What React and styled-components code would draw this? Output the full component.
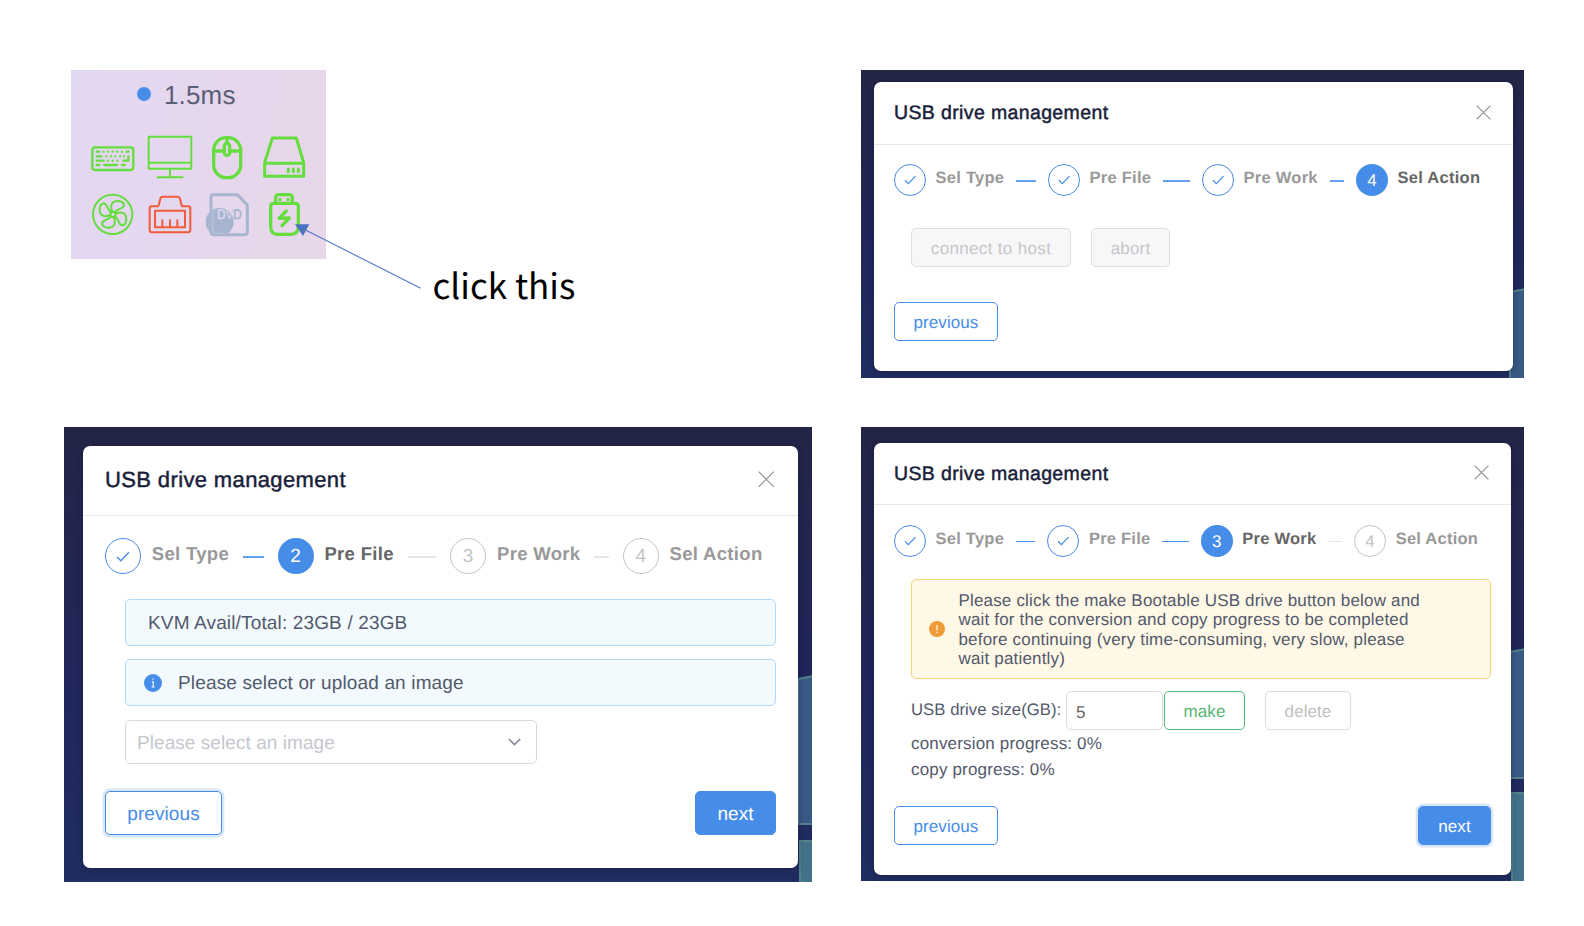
import React from 'react';
import styled, { createGlobalStyle, css, ThemeProvider } from 'styled-components';

const GlobalStyle = createGlobalStyle`
  * { box-sizing: border-box; }
  body {
    margin: 0;
    background: #fff;
    font-family: "Liberation Sans", Arial, sans-serif;
    color: #53596c;
    text-rendering: geometricPrecision;
  }
  button, input { font-family: inherit; text-rendering: inherit; }
`;

const compact = {
  titleSize: 19.5, titleSpacing: 0.37, titleDrop: 2, header: 62, pad: 20, close: 15,
  circle: 32, labelGap: 9.5, labelLift: 3, lineGap: 12, labelSize: 16.5, labelSpacing: 0.27, pitch: 154, numSize: 17,
  font: 17, spacing: 0.17, textDrop: 1, buttonH: 39, buttonDrop: 2, indent: 17, lineH: 2,
};
const compactNarrow = { ...compact, header: 61, pitch: 153.4, lineH: 1, labelSpacing: 0.24 };
const large = {
  titleSize: 22, titleSpacing: 0.37, titleDrop: 0, header: 69, pad: 22, close: 16.5,
  circle: 36, labelGap: 10.8, labelLift: 5, lineGap: 14, labelSize: 18.5, labelSpacing: 0.32, pitch: 172.6, numSize: 19,
  font: 19, spacing: 0.15, textDrop: 3, buttonH: 44, buttonDrop: 3, indent: 20, lineH: 2,
};

const Page = styled.main`
  width: 1584px;
  height: 926px;
  padding: 70px 0 0 64px;
  display: grid;
  grid-template-columns: 748px 663px;
  grid-template-rows: 308px 455px;
  gap: 49px;
  align-items: start;
  overflow: hidden;
`;

/* ---------- status widget ---------- */
const Intro = styled.section`
  position: relative;
  display: flex;
  align-items: flex-start;
  padding-left: 7px;
`;
const StatusCard = styled.div`
  width: 255px;
  height: 189px;
  background: linear-gradient(100deg, #e3d8f2 0%, #e5d7ee 45%, #e8d7e9 100%);
`;
const Latency = styled.div`
  display: flex;
  align-items: center;
  height: 51px;
  padding-left: 65.5px;
  gap: 13.5px;
  font-size: 26px;
  letter-spacing: 0.15px;
  color: #5b6074;
`;
const Dot = styled.span`
  width: 14px;
  height: 14px;
  border-radius: 50%;
  background: #468ce9;
  margin-bottom: 3px;
`;
const IconGrid = styled.div`
  display: grid;
  grid-template-columns: repeat(4, 44px);
  gap: 13px;
  padding: 15px 0 0 20px;
`;
const Glyph = styled.svg.attrs({ viewBox: '0 0 132 132' })`
  width: 44px;
  height: 44px;
  display: block;
  overflow: visible;
  fill: none;
  stroke: ${(p) => p.$color || '#66dd3f'};
  stroke-width: ${(p) => p.$w || 6};
  stroke-linecap: round;
  stroke-linejoin: round;
`;
const Arrow = styled.svg`
  position: absolute;
  left: 231px;
  top: 154px;
  width: 127px;
  height: 66px;
`;
const Hint = styled.p`
  margin: 187px 0 0 106.5px;
  font-family: "Noto Sans CJK SC", "Noto Sans", sans-serif;
  font-size: 35px;
  line-height: 56px;
  color: #000;
  white-space: nowrap;
`;

const Petal = ({ turn }) => (
  <path
    transform={`rotate(${turn} 66 64)`}
    d="M64 56 C56 38 62 24 80 24 C100 25 104 38 92 45 C83 50 77 50 72 58"
  />
);

const StatusIcons = () => (
  <IconGrid>
    <Glyph $w={7}>
      <rect x="4" y="34" width="123" height="68" rx="8" />
      <path d="M17 47h8M107 47h6M17 61h14M17 74h21M17 87h8M39 87h39M93 87h8M98 74h14V61" />
      <path d="M38 47h.1M51 47h.1M65 47h.1M79 47h.1M93 47h.1M46 61h.1M60 61h.1M73 61h.1M87 61h.1M99 61h.1M51 74h.1M65 74h.1M79 74h.1" />
    </Glyph>
    <Glyph>
      <path d="M2 2H130V98H2ZM2 80H130M66 98V123M29 124H104" />
    </Glyph>
    <Glyph $w={10}>
      <rect x="26" y="5" width="81" height="120" rx="38" />
      <path d="M26 45H58M74 45H107M66 4V22" />
      <rect x="58" y="22" width="16" height="36" rx="8" />
    </Glyph>
    <Glyph $w={9}>
      <path d="M8 82H125V121H8ZM8 80L31 6H103L125 80" />
      <path d="M79 99V107M94 99V107M109 99V107" />
    </Glyph>
    <Glyph>
      <circle cx="65" cy="64" r="59" />
      <circle cx="66" cy="64" r="8" />
      <Petal turn={0} />
      <Petal turn={90} />
      <Petal turn={180} />
      <Petal turn={270} />
    </Glyph>
    <Glyph $color="#f05b3b">
      <path d="M10 40H28Q32 40 33 34L37 17Q38 11 45 11H88Q94 11 96 17L100 34Q101 40 106 40H120Q127 40 127 47V111Q127 118 120 118H12Q5 118 5 111V47Q5 40 10 40Z" />
      <path d="M21 53H111V103H21ZM43 82V103M66 82V103M88 82V103" />
    </Glyph>
    <Glyph $color="#a8b5d1" $w={9}>
      <path d="M25 5H97L127 36V116Q127 125 118 125H28Q18 125 18 116V13Q18 5 25 5Z" />
      <circle cx="44" cy="87" r="42" fill="#a8b5d1" stroke="none" />
      <path d="M23 52V114Q23 121 30 121H54" stroke="#bcc5dc" strokeWidth="3" />
      <text transform="translate(36 79) scale(.84 1)" fontSize="42" strokeWidth="1.6">
        <tspan fill="#dcd8ec" stroke="#dcd8ec">D</tspan>
        <tspan fill="#cdd0e6" stroke="#cdd0e6">V</tspan>
        <tspan fill="#a8b5d1">D</tspan>
      </text>
    </Glyph>
    <Glyph $w={10}>
      <path d="M34 31H100Q109 31 109 40V102Q108 124 86 124H48Q27 124 26 102V40Q26 31 34 31Z" />
      <path d="M41 31V14Q41 5 50 5H82Q91 5 91 14V31" />
      <path d="M54 19V20M78 19V20M73 54L51 76L82 75L60 98" />
    </Glyph>
  </IconGrid>
);

/* ---------- dialog ---------- */
const Backdrop = styled.section`
  position: relative;
  height: ${(p) => p.$height}px;
  padding: ${(p) => p.$padding};
  background: linear-gradient(180deg, #232547 0%, #20265a 55%, #202d60 100%);
`;
const Scenery = styled.svg`
  position: absolute;
  right: 0;
  bottom: 0;
  width: 16px;
  height: 100%;
`;
const Dialog = styled.div`
  position: relative;
  height: 100%;
  background: #fff;
  border-radius: 7px;
  box-shadow: 0 1px 6px rgba(8, 12, 40, 0.35);
`;
const Header = styled.header`
  display: flex;
  align-items: center;
  justify-content: space-between;
  height: ${(p) => p.theme.header + 1}px;
  padding: 0 ${(p) => p.theme.pad + 1.7}px 1px ${(p) => p.theme.pad}px;
  border-bottom: 1px solid #e6e8ec;
`;
const Title = styled.h2`
  margin: 0;
  padding-top: ${(p) => p.theme.titleDrop}px;
  font-size: ${(p) => p.theme.titleSize}px;
  font-weight: 400;
  letter-spacing: ${(p) => p.theme.titleSpacing}px;
  color: #182039;
  -webkit-text-stroke: 0.45px #182039;
`;
const CloseIcon = styled.svg.attrs({ viewBox: '0 0 15 15' })`
  width: ${(p) => p.theme.close}px;
  height: ${(p) => p.theme.close}px;
  margin-bottom: 1px;
  fill: none;
  stroke: #8f8f8f;
  stroke-width: 1.1;
`;
const Steps = styled.ol`
  display: flex;
  list-style: none;
  margin: 0;
  padding: 0 0 0 ${(p) => p.theme.pad}px;
`;
const Step = styled.li`
  display: flex;
  align-items: center;
  flex: 0 0 ${(p) => (p.$last ? 'auto' : `${p.theme.pitch}px`)};
  height: ${(p) => p.theme.circle}px;
`;
const states = {
  done: css`border: 1.5px solid #468ce9; color: #468ce9;`,
  active: css`background: #468ce9; color: #fff;`,
  todo: css`border: 1px solid #c4c4c4; color: #c4c4c4;`,
};
const Circle = styled.span`
  flex: none;
  display: flex;
  align-items: center;
  justify-content: center;
  width: ${(p) => p.theme.circle}px;
  height: ${(p) => p.theme.circle}px;
  padding-top: ${(p) => (p.$state === 'done' ? 0 : 1)}px;
  border-radius: 50%;
  font-size: ${(p) => p.theme.numSize}px;
  ${(p) => states[p.$state]}
`;
const Tick = styled.svg.attrs({ viewBox: '0 0 13 11' })`
  width: ${(p) => p.theme.circle * 0.39}px;
  fill: none;
  stroke: currentColor;
  stroke-width: 1.3;
  margin-top: 1px;
`;
const StepLabel = styled.strong`
  margin: 0 0 ${(p) => p.theme.labelLift}px ${(p) => p.theme.labelGap}px;
  font-size: ${(p) => p.theme.labelSize}px;
  letter-spacing: ${(p) => p.theme.labelSpacing}px;
  white-space: nowrap;
  color: ${(p) => (p.$active ? '#666' : '#999')};
`;
const StepLine = styled.span`
  flex: 1;
  height: ${(p) => p.theme.lineH}px;
  margin: 1px ${(p) => p.theme.lineGap}px 0;
  background: ${(p) => (p.$done ? (p.theme.lineH === 1 ? '#468ce9' : '#66a1ef') : '#e6e6e6')};
`;
const Body = styled.div`
  padding-top: ${(p) => p.$top}px;
  font-size: ${(p) => p.theme.font}px;
  letter-spacing: ${(p) => p.theme.spacing}px;
`;
const Content = styled.div`
  display: flex;
  flex-direction: column;
  margin: 0 ${(p) => p.theme.pad}px 0 ${(p) => p.theme.pad + p.theme.indent}px;
  padding-top: ${(p) => p.$top}px;
`;
const tones = {
  info: css`background: #f2fafd; border-color: #afd9fa;`,
  warning: css`background: #fff8e6; border-color: #f5d27c;`,
};
const Alert = styled.div`
  display: flex;
  align-items: center;
  height: ${(p) => p.$height}px;
  margin-bottom: ${(p) => p.$after}px;
  padding-left: ${(p) => p.$inset}px;
  gap: ${(p) => p.$gap || 0}px;
  border: 1px solid;
  border-radius: 5px;
  line-height: 19.5px;
  white-space: pre-line;
  ${(p) => tones[p.$tone]}
`;
const Message = styled.span`
  padding-top: ${(p) => p.theme.textDrop}px;
`;
const Badge = styled.svg.attrs({ viewBox: '0 0 18 18' })`
  flex: none;
  width: ${(p) => p.$size}px;
  height: ${(p) => p.$size}px;
`;
const SelectBox = styled.div`
  display: flex;
  align-items: center;
  justify-content: space-between;
  width: 412px;
  height: 44px;
  padding: 0 15px 0 11px;
  border: 1px solid #d8d9e0;
  border-radius: 5px;
  line-height: 20px;
  letter-spacing: 0.06px;
  color: #c5c7ce;
`;
const Chevron = styled.svg.attrs({ viewBox: '0 0 13 8' })`
  width: 13px;
  height: 8px;
  fill: none;
  stroke: #848995;
  stroke-width: 1.7;
`;
const kinds = {
  outline: css`background: #fff; border-color: #468ce9; color: #468ce9;`,
  primary: css`background: #468ce9; border-color: #468ce9; color: #fff;`,
  success: css`background: #fff; border-color: #56b775; color: #56b775;`,
  muted: css`background: #f7f7f8; border-color: #dddee3; color: #c5c6cb;`,
  disabled: css`background: #fff; border-color: #dddee3; color: #bfbfc1;`,
};
const Button = styled.button`
  width: ${(p) => p.$width}px;
  height: ${(p) => p.theme.buttonH}px;
  padding: ${(p) => p.theme.buttonDrop}px 0 0;
  border: 1px solid;
  border-radius: 5px;
  font-size: ${(p) => p.theme.font}px;
  letter-spacing: ${(p) => p.$spacing ?? 0.08}px;
  ${(p) => kinds[p.$kind]}
  ${(p) => p.$focus && css`box-shadow: 0 0 0 2.4px #d8e6fa;`}
`;
const Row = styled.div`
  display: flex;
  gap: ${(p) => p.$gap || 0}px;
`;
const Footer = styled.footer`
  display: flex;
  justify-content: space-between;
  padding: ${(p) => p.$top}px ${(p) => p.theme.pad}px 0;
`;
const SizeLabel = styled.label`
  width: 155px;
  line-height: 38px;
  letter-spacing: 0.05px;
  font-size: 16.7px;
`;
const SizeInput = styled.input`
  width: 97px;
  height: 39px;
  margin-right: 1px;
  padding: 4px 9px 0;
  border: 1px solid #dddee3;
  border-radius: 5px;
  font-size: 17px;
  color: #666;
  background: #fff;
`;
const Progress = styled.div`
  height: 26px;
  line-height: 28px;
`;

const labels = ['Sel Type', 'Pre File', 'Pre Work', 'Sel Action'];

function StepBar({ current }) {
  return (
    <Steps>
      {labels.map((label, i) => {
        const n = i + 1;
        const state = n < current ? 'done' : n === current ? 'active' : 'todo';
        return (
          <Step key={label} $last={n === 4}>
            <Circle $state={state}>
              {state === 'done' ? <Tick><path d="M1 5.5L4.5 9L12 1.2" /></Tick> : n}
            </Circle>
            <StepLabel $active={state === 'active'}>{label}</StepLabel>
            {n < 4 && <StepLine $done={state === 'done'} />}
          </Step>
        );
      })}
    </Steps>
  );
}

function Buildings({ height, top, split, next }) {
  const end = split || height + 4;
  return (
    <Scenery viewBox={`0 0 16 ${height}`} preserveAspectRatio="none">
      <g fill="#385a84" stroke="#54808a" strokeWidth="2">
        <path d={`M2 ${top + 2}L18 ${top - 1}V${end}H2Z`} />
        {next && <path fill="#42718a" d={`M4 ${next}H18V${height + 4}H4Z`} />}
      </g>
    </Scenery>
  );
}

function UsbDialog({ theme, height, padding, stepsTop, current, scenery, children }) {
  return (
    <ThemeProvider theme={theme}>
      <Backdrop $height={height} $padding={padding}>
        <Buildings height={height} {...scenery} />
        <Dialog>
          <Header>
            <Title>USB drive management</Title>
            <CloseIcon><path d="M.6 .6L14.4 14.4M14.4 .6L.6 14.4" /></CloseIcon>
          </Header>
          <Body $top={stepsTop}>
            <StepBar current={current} />
            {children}
          </Body>
        </Dialog>
      </Backdrop>
    </ThemeProvider>
  );
}

export default function App() {
  return (
    <>
      <GlobalStyle />
      <Page>
        <Intro>
          <StatusCard>
            <Latency><Dot />1.5ms</Latency>
            <StatusIcons />
          </StatusCard>
          <Hint>click this</Hint>
          <Arrow viewBox="0 0 127 66">
            <path d="M11 6.2L125.7 64.3" stroke="#4d78c9" strokeWidth="1.1" />
            <path d="M0 .3H14.3L8 12Z" fill="#4a73c0" />
          </Arrow>
        </Intro>

        <UsbDialog theme={compact} height={308} padding="12px 11px 7px 13px" stepsTop={19} current={4}
          scenery={{ top: 220 }}>
          <Content $top={32}>
            <Row $gap={20}>
              <Button $width={160} $kind="muted" $spacing={0.34} disabled>connect to host</Button>
              <Button $width={79} $kind="muted" $spacing={0.2} disabled>abort</Button>
            </Row>
          </Content>
          <Footer $top={35}>
            <Button $width={104} $kind="outline">previous</Button>
          </Footer>
        </UsbDialog>

        <UsbDialog theme={large} height={455} padding="19px 14px 14px 19px" stepsTop={22} current={2}
          scenery={{ top: 250, split: 397, next: 414 }}>
          <Content $top={25}>
            <Alert $tone="info" $height={47} $after={13} $inset={22}><Message>KVM Avail/Total: 23GB / 23GB</Message></Alert>
            <Alert $tone="info" $height={47} $after={14} $inset={18} $gap={16}>
              <Badge $size={18}>
                <circle cx="9" cy="9" r="9" fill="#468ce9" />
                <path d="M9 4.6V5.8M7.8 7.8H9.2V12.8M7.6 13H10.6" stroke="#fff" strokeWidth="1.1" fill="none" />
              </Badge>
              <Message>Please select or upload an image</Message>
            </Alert>
            <SelectBox>
              <Message>Please select an image</Message>
              <Chevron><path d="M.8 1L6.5 6.6L12.2 1" /></Chevron>
            </SelectBox>
          </Content>
          <Footer $top={27}>
            <Button $width={117} $kind="outline" $focus>previous</Button>
            <Button $width={81} $kind="primary">next</Button>
          </Footer>
        </UsbDialog>

        <UsbDialog theme={compactNarrow} height={454} padding="16px 13px 6px 13px" stepsTop={20} current={3}
          scenery={{ top: 223, split: 351, next: 366 }}>
          <Content $top={22}>
            <Alert $tone="warning" $height={100} $after={12} $inset={17} $gap={13.5}>
              <Badge $size={16}>
                <circle cx="9" cy="9" r="9" fill="#ef9b38" />
                <path d="M9 4.4V10.6M9 12.2V13.6" stroke="#fff" strokeWidth="1.3" />
              </Badge>
              <Message>
                {`Please click the make Bootable USB drive button below and
                wait for the conversion and copy progress to be completed
                before continuing (very time-consuming, very slow, please
                wait patiently)`}
              </Message>
            </Alert>
            <Row>
              <SizeLabel>USB drive size(GB):</SizeLabel>
              <SizeInput defaultValue="5" />
              <Row $gap={20}>
                <Button $width={81} $kind="success">make</Button>
                <Button $width={86} $kind="disabled" disabled>delete</Button>
              </Row>
            </Row>
            <Progress>conversion progress: 0%</Progress>
            <Progress>copy progress: 0%</Progress>
          </Content>
          <Footer $top={24}>
            <Button $width={104} $kind="outline">previous</Button>
            <Button $width={73} $kind="primary" $focus>next</Button>
          </Footer>
        </UsbDialog>
      </Page>
    </>
  );
}
